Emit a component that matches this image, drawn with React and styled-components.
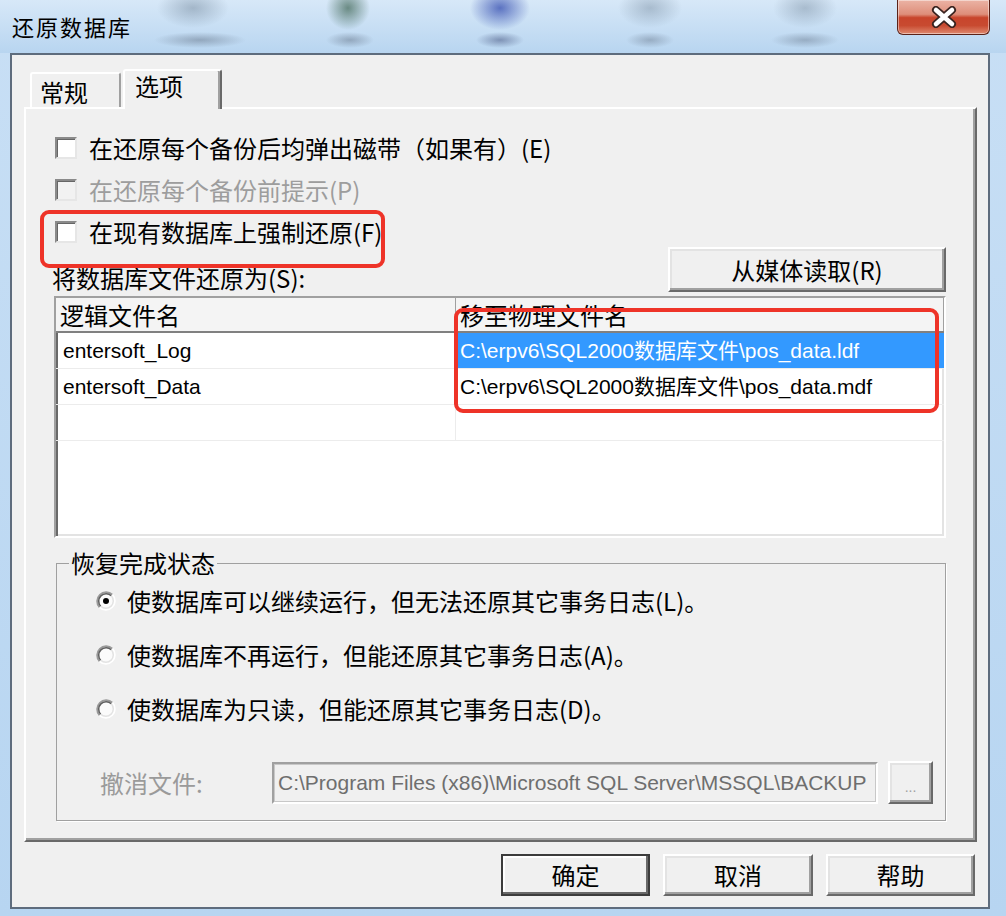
import React from "react";
import styled, { createGlobalStyle, css } from "styled-components";

const GlobalStyle = createGlobalStyle`
  html, body {
    margin: 0;
    padding: 0;
    background: #b9d6f2;
  }
  body {
    font-family: "Noto Sans CJK SC", "Liberation Sans", sans-serif;
    color: #000;
  }
  * {
    box-sizing: border-box;
  }
`;

const raised = css`
  border: 2px solid;
  border-color: #fff #696969 #696969 #fff;
  box-shadow: inset -2px -2px 0 #a0a0a0, inset 2px 2px 0 #e3e3e3;
  background: #f0f0f0;
`;

const sunken = css`
  border: 2px solid;
  border-color: #a0a0a0 #fff #fff #a0a0a0;
  box-shadow: inset 2px 2px 0 #696969, inset -2px -2px 0 #e3e3e3;
`;

const Window = styled.div`
  width: 1006px;
  height: 916px;
  display: flex;
  flex-direction: column;
  background: linear-gradient(#c8dff5, #b7d5f1);
  overflow: hidden;
`;

const TitleBar = styled.div`
  height: 53px;
  flex: none;
  display: flex;
  justify-content: space-between;
  align-items: flex-start;
  padding: 0 16px 0 12px;
  background:
    radial-gradient(36px 20px at 193px 8px, rgba(105, 125, 145, 0.45), transparent),
    radial-gradient(22px 22px at 348px 8px, rgba(50, 90, 70, 0.65), transparent),
    radial-gradient(30px 22px at 500px 8px, rgba(40, 65, 170, 0.7), transparent),
    radial-gradient(32px 20px at 650px 8px, rgba(105, 125, 145, 0.4), transparent),
    radial-gradient(32px 20px at 805px 8px, rgba(105, 125, 145, 0.4), transparent),
    radial-gradient(46px 8px at 200px 40px, rgba(90, 105, 125, 0.45), transparent),
    radial-gradient(24px 8px at 350px 40px, rgba(90, 105, 125, 0.45), transparent),
    radial-gradient(24px 8px at 500px 40px, rgba(60, 75, 120, 0.5), transparent),
    radial-gradient(24px 8px at 650px 40px, rgba(90, 105, 125, 0.4), transparent),
    radial-gradient(34px 8px at 805px 40px, rgba(90, 105, 125, 0.4), transparent),
    linear-gradient(#d7e8f8, #b8d5f0);
`;

const Title = styled.div`
  margin-top: 13px;
  font-size: 22px;
  line-height: 26px;
  letter-spacing: 2px;
`;

const CloseButton = styled.div`
  width: 93px;
  height: 35px;
  border: 1px solid #5b2218;
  border-top: none;
  border-radius: 0 0 6px 6px;
  background: linear-gradient(
    #ebb3a5 0%,
    #de8e7a 42%,
    #c8452c 52%,
    #c84a30 75%,
    #df8a70 100%
  );
  box-shadow: inset 0 0 0 1px rgba(255, 255, 255, 0.45);
  display: flex;
  align-items: center;
  justify-content: center;
`;

const Client = styled.div`
  flex: 1;
  margin: 0 16px 7px 10px;
  border: 2px solid #5e6c7d;
  background: #f0f0f0;
  padding: 14px 11px 0 12px;
  display: flex;
  flex-direction: column;
`;

const TabStrip = styled.div`
  height: 38px;
  display: flex;
  align-items: flex-end;
  gap: 2px;
  padding-left: 6px;
  position: relative;
  z-index: 1;
`;

const Tab = styled.div`
  width: ${(p) => (p.$active ? 99 : 91)}px;
  height: ${(p) => (p.$active ? 40 : 35)}px;
  margin-bottom: ${(p) => (p.$active ? -2 : 0)}px;
  padding: ${(p) => (p.$active ? "1px 0 0 10px" : "4px 0 0 8px")};
  border: 2px solid;
  border-bottom: none;
  border-color: #fff ${(p) => (p.$active ? "#696969" : "#a0a0a0")} #fff #fff;
  border-radius: 3px 3px 0 0;
  box-shadow: ${(p) => (p.$active ? "inset -2px 0 0 #a0a0a0" : "none")};
  background: #f0f0f0;
  font-size: 24px;
  line-height: 28px;
`;

const Panel = styled.div`
  position: relative;
  height: 735px;
  border: 2px solid;
  border-color: #fff #696969 #696969 #fff;
  box-shadow: inset -2px -2px 0 #a0a0a0;
  padding: 24px 29px 0 26px;
`;

const CheckList = styled.div`
  display: flex;
  flex-direction: column;
  gap: 12px;
  margin-left: 3px;
`;

const CheckRow = styled.div`
  height: 30px;
  display: flex;
  align-items: center;
  gap: 12px;
  font-size: 24px;
  line-height: 30px;
  color: ${(p) => (p.$disabled ? "#9d9d9d" : "#000")};
`;

const CheckBox = styled.span`
  width: 22px;
  height: 22px;
  flex: none;
  border: 2px solid;
  border-color: #8a8a8a #e6e6e6 #e6e6e6 #8a8a8a;
  box-shadow: inset 1px 1px 0 #666;
  background: ${(p) => (p.$disabled ? "#f2f2f2" : "#fff")};
`;

const FileRow = styled.div`
  display: flex;
  justify-content: space-between;
  align-items: flex-end;
`;

const FieldLabel = styled.div`
  font-size: 24px;
  line-height: 28px;
`;

const Button = styled.div`
  ${raised};
  width: ${(p) => p.$w}px;
  height: ${(p) => p.$h}px;
  display: flex;
  align-items: center;
  justify-content: center;
  font-size: 24px;
  line-height: 28px;
  color: ${(p) => (p.$disabled ? "#a0a0a0" : "#000")};
  ${(p) =>
    p.$default &&
    css`
      border-color: #3c3c3c;
      box-shadow: inset -2px -2px 0 #696969, inset 2px 2px 0 #fff;
    `}
`;

const Table = styled.div`
  ${sunken};
  margin: 4px 0 0 2px;
  height: 242px;
  background: #fff;
  overflow: hidden;
`;

const HeaderRow = styled.div`
  display: grid;
  grid-template-columns: 400px 1fr;
  height: 35px;
  background: #f4f4f4;
  border-bottom: 2px solid #808080;
`;

const HeaderCell = styled.div`
  padding-left: 4px;
  border-right: 1px solid #a0a0a0;
  font-size: 24px;
  line-height: 33px;
  white-space: nowrap;
`;

const DataRow = styled.div`
  display: grid;
  grid-template-columns: 400px 1fr;
  height: 36px;
  border-bottom: 1px solid #ececec;
`;

const Cell = styled.div`
  padding-left: ${(p) => (p.$first ? 7 : 4)}px;
  border-right: ${(p) => (p.$first ? "1px solid #ececec" : "none")};
  font-family: "Liberation Sans", "Noto Sans CJK SC", sans-serif;
  font-size: 21px;
  line-height: 35px;
  white-space: nowrap;
  overflow: hidden;
  background: ${(p) => (p.$selected ? "#3399ff" : "transparent")};
  color: ${(p) => (p.$selected ? "#fff" : "#000")};
`;

const Group = styled.fieldset`
  margin: 13px 0 0 4px;
  padding: 10px 12px 16px 12px;
  border: 1px solid #a0a0a0;
  box-shadow: 1px 1px 0 #fff;
  min-width: 0;
`;

const Legend = styled.legend`
  padding: 0 2px;
  font-size: 24px;
  line-height: 24px;
`;

const RadioList = styled.div`
  display: flex;
  flex-direction: column;
  gap: 22px;
  padding-left: 26px;
`;

const RadioRow = styled.div`
  height: 32px;
  display: flex;
  align-items: center;
  gap: 10px;
  font-size: 24px;
  line-height: 32px;
`;

const RestoreRow = styled.div`
  margin-top: 36px;
  padding-left: 31px;
  display: flex;
  align-items: center;
`;

const MutedLabel = styled.div`
  width: 172px;
  flex: none;
  font-size: 24px;
  line-height: 30px;
  color: #9a9a9a;
`;

const TextBox = styled.div`
  width: 606px;
  height: 42px;
  border: 2px solid;
  border-color: #a0a0a0 #fff #fff #a0a0a0;
  outline: 1px solid #c8c8c8;
  outline-offset: -3px;
  padding: 0 4px;
  background: #f0f0f0;
  font-family: "Liberation Sans", sans-serif;
  font-size: 21px;
  line-height: 38px;
  color: #6e6e6e;
  white-space: nowrap;
  overflow: hidden;
`;

const BrowseButton = styled(Button)`
  margin-left: 10px;
  align-items: flex-end;
  padding-bottom: 8px;
  font-family: "Liberation Sans", sans-serif;
  font-size: 14px;
  line-height: 14px;
`;

const ButtonRow = styled.div`
  margin-top: 12px;
  padding-right: 2px;
  display: flex;
  justify-content: flex-end;
  gap: 13px;
`;

const Highlight = styled.div`
  position: absolute;
  left: ${(p) => p.$x}px;
  top: ${(p) => p.$y}px;
  width: ${(p) => p.$w}px;
  height: ${(p) => p.$h}px;
  border: 4px solid #ee3328;
  border-radius: 9px;
  pointer-events: none;
`;

const CloseGlyph = () => (
  <svg width="28" height="22" viewBox="0 0 28 22">
    <path d="M6 4 L22 18 M22 4 L6 18" stroke="#3a2420" strokeWidth="8" strokeLinecap="round" />
    <path d="M6 4 L22 18 M22 4 L6 18" stroke="#fff" strokeWidth="4.5" strokeLinecap="round" />
  </svg>
);

const RadioIcon = ({ checked }) => (
  <svg width="22" height="22" viewBox="0 0 22 22" style={{ flex: "none" }}>
    <circle cx="11" cy="11" r="9" fill="#fbfbfb" />
    <path d="M4.64 17.36 A9 9 0 0 1 17.36 4.64" fill="none" stroke="#9a9a9a" strokeWidth="2" />
    <path d="M17.36 4.64 A9 9 0 0 1 4.64 17.36" fill="none" stroke="#fff" strokeWidth="2" />
    <path d="M5.7 16.3 A7.5 7.5 0 0 1 16.3 5.7" fill="none" stroke="#5f5f5f" strokeWidth="1.5" />
    <path d="M16.3 5.7 A7.5 7.5 0 0 1 5.7 16.3" fill="none" stroke="#e3e3e3" strokeWidth="1.5" />
    {checked && <circle cx="11" cy="11" r="3" fill="#000" />}
  </svg>
);

const checks = [
  { label: "在还原每个备份后均弹出磁带（如果有）(E)" },
  { label: "在还原每个备份前提示(P)", disabled: true },
  { label: "在现有数据库上强制还原(F)" },
];

const files = [
  { logical: "entersoft_Log", physical: "C:\\erpv6\\SQL2000数据库文件\\pos_data.ldf", selected: true },
  { logical: "entersoft_Data", physical: "C:\\erpv6\\SQL2000数据库文件\\pos_data.mdf" },
  { logical: "", physical: "" },
];

const recovery = [
  "使数据库可以继续运行，但无法还原其它事务日志(L)。",
  "使数据库不再运行，但能还原其它事务日志(A)。",
  "使数据库为只读，但能还原其它事务日志(D)。",
];

export default function App() {
  return (
    <>
      <GlobalStyle />
      <Window>
        <TitleBar>
          <Title>还原数据库</Title>
          <CloseButton>
            <CloseGlyph />
          </CloseButton>
        </TitleBar>
        <Client>
          <TabStrip>
            <Tab>常规</Tab>
            <Tab $active>选项</Tab>
          </TabStrip>
          <Panel>
            <CheckList>
              {checks.map((c) => (
                <CheckRow key={c.label} $disabled={c.disabled}>
                  <CheckBox $disabled={c.disabled} />
                  {c.label}
                </CheckRow>
              ))}
            </CheckList>
            <FileRow>
              <FieldLabel>将数据库文件还原为(S):</FieldLabel>
              <Button $w={278} $h={45}>从媒体读取(R)</Button>
            </FileRow>
            <Table>
              <HeaderRow>
                <HeaderCell>逻辑文件名</HeaderCell>
                <HeaderCell>移至物理文件名</HeaderCell>
              </HeaderRow>
              {files.map((f, i) => (
                <DataRow key={i}>
                  <Cell $first>{f.logical}</Cell>
                  <Cell $selected={f.selected}>{f.physical}</Cell>
                </DataRow>
              ))}
            </Table>
            <Group>
              <Legend>恢复完成状态</Legend>
              <RadioList>
                {recovery.map((r, i) => (
                  <RadioRow key={r}>
                    <RadioIcon checked={i === 0} />
                    {r}
                  </RadioRow>
                ))}
              </RadioList>
              <RestoreRow>
                <MutedLabel>撤消文件:</MutedLabel>
                <TextBox>C:\Program Files (x86)\Microsoft SQL Server\MSSQL\BACKUP</TextBox>
                <BrowseButton $w={45} $h={43} $disabled>...</BrowseButton>
              </RestoreRow>
            </Group>
            <Highlight $x={14} $y={101} $w={345} $h={58} />
            <Highlight $x={428} $y={199} $w={485} $h={105} />
          </Panel>
          <ButtonRow>
            <Button $w={149} $h={42} $default>确定</Button>
            <Button $w={150} $h={42}>取消</Button>
            <Button $w={149} $h={42}>帮助</Button>
          </ButtonRow>
        </Client>
      </Window>
    </>
  );
}
